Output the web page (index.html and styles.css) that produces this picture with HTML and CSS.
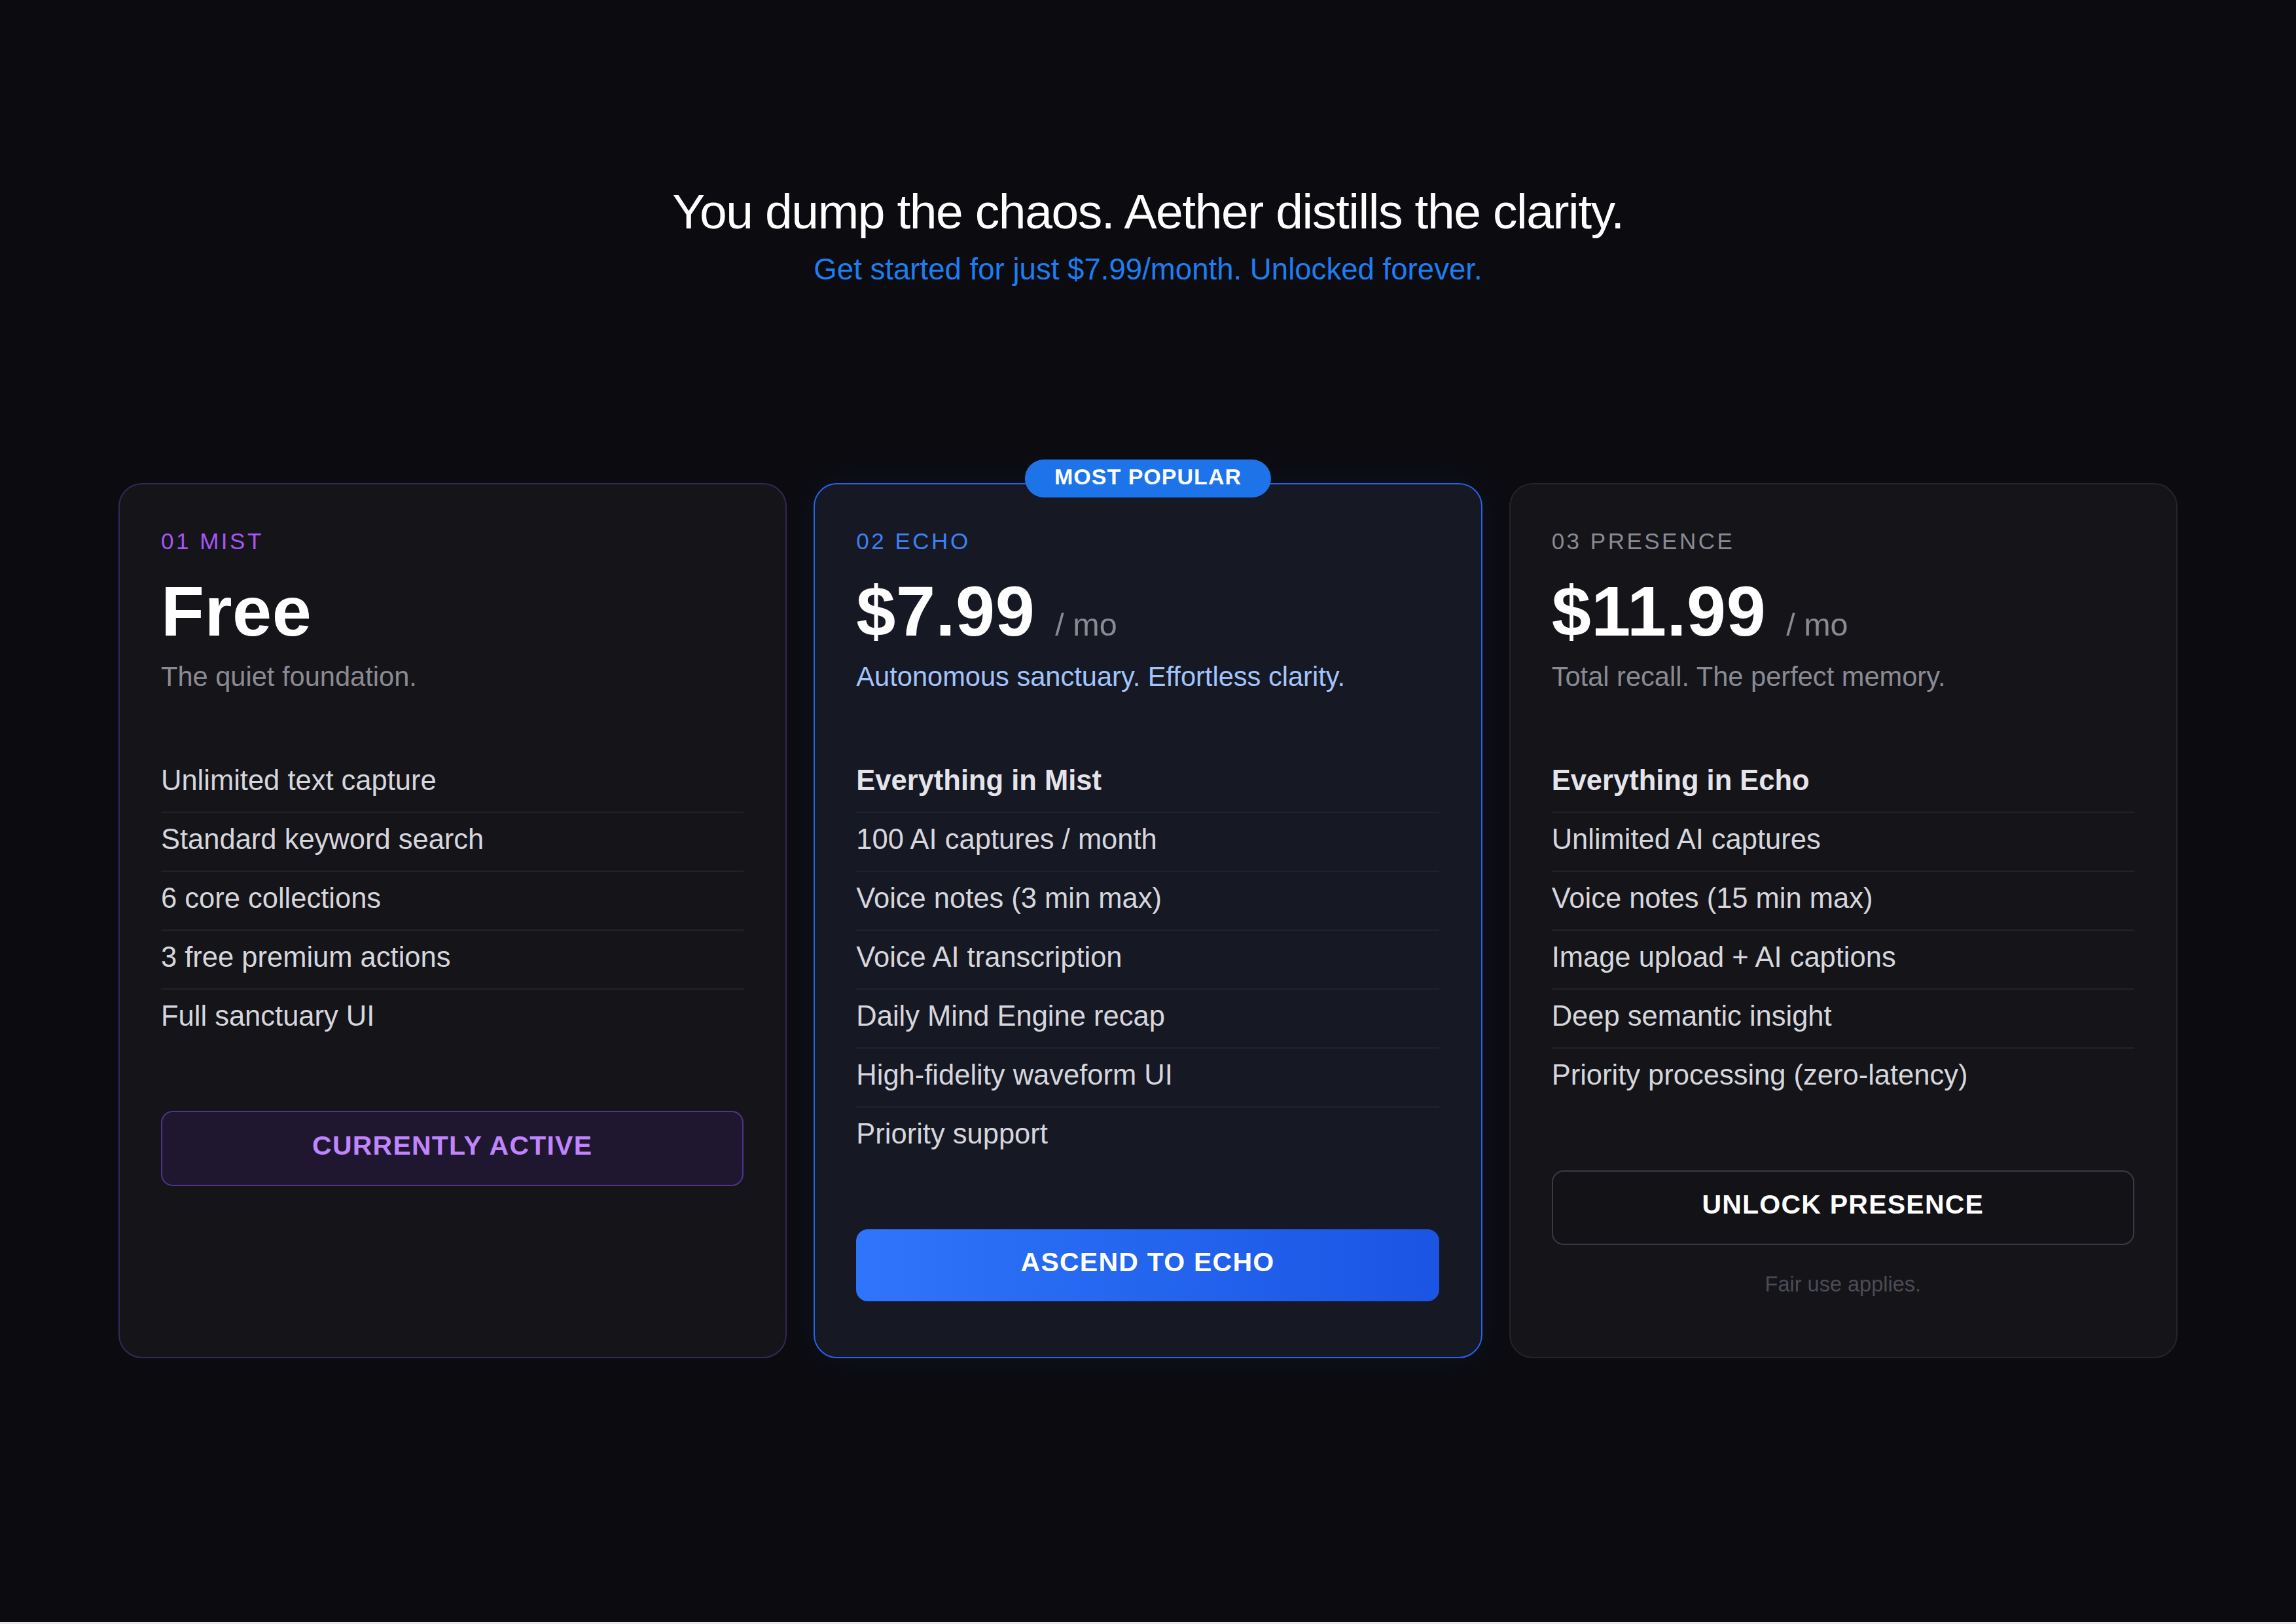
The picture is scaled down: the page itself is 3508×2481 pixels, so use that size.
FILE: index.html
```html
<!DOCTYPE html>
<html lang="en">
<head>
<meta charset="utf-8">
<title>Aether Pricing</title>
<link rel="stylesheet" href="styles.css">
</head>
<body>
<main class="page">
  <header class="hero">
    <h1 class="hero-title">You dump the chaos. Aether distills the clarity.</h1>
    <p class="hero-sub">Get started for just $7.99/month. Unlocked forever.</p>
  </header>

  <section class="plans">
    <article class="card card-mist">
      <div class="tier">01 MIST</div>
      <div class="price-row"><span class="price">Free</span></div>
      <p class="tagline">The quiet foundation.</p>
      <ul class="features">
        <li>Unlimited text capture</li>
        <li>Standard keyword search</li>
        <li>6 core collections</li>
        <li>3 free premium actions</li>
        <li>Full sanctuary UI</li>
      </ul>
      <button class="cta cta-active">CURRENTLY ACTIVE</button>
    </article>

    <article class="card card-echo">
      <div class="badge">MOST POPULAR</div>
      <div class="tier">02 ECHO</div>
      <div class="price-row"><span class="price">$7.99</span><span class="per">/ mo</span></div>
      <p class="tagline">Autonomous sanctuary. Effortless clarity.</p>
      <ul class="features">
        <li class="lead">Everything in Mist</li>
        <li>100 AI captures / month</li>
        <li>Voice notes (3 min max)</li>
        <li>Voice AI transcription</li>
        <li>Daily Mind Engine recap</li>
        <li>High-fidelity waveform UI</li>
        <li>Priority support</li>
      </ul>
      <button class="cta cta-primary">ASCEND TO ECHO</button>
    </article>

    <article class="card card-presence">
      <div class="tier">03 PRESENCE</div>
      <div class="price-row"><span class="price">$11.99</span><span class="per">/ mo</span></div>
      <p class="tagline">Total recall. The perfect memory.</p>
      <ul class="features">
        <li class="lead">Everything in Echo</li>
        <li>Unlimited AI captures</li>
        <li>Voice notes (15 min max)</li>
        <li>Image upload + AI captions</li>
        <li>Deep semantic insight</li>
        <li>Priority processing (zero-latency)</li>
      </ul>
      <button class="cta cta-outline">UNLOCK PRESENCE</button>
      <p class="fineprint">Fair use applies.</p>
    </article>
  </section>
</main>
</body>
</html>
```

FILE: styles.css
```css
* {
  box-sizing: border-box;
}

html {
  margin: 0;
  padding: 0;
  background: #e8e8ec;
}

body {
  margin: 0;
  padding: 0;
  background: #0c0c10;
  font-family: "Liberation Sans", Arial, Helvetica, sans-serif;
  color: #ffffff;
  height: 2478px;
  overflow: hidden;
}

.page {
  display: flex;
  flex-direction: column;
  align-items: center;
  padding-top: 278px;
}

.hero {
  text-align: center;
}

.hero-title {
  margin: 0;
  font-size: 75px;
  line-height: 90px;
  font-weight: 400;
  letter-spacing: -0.019em;
  color: #ffffff;
}

.hero-sub {
  margin: 12px 0 0;
  font-size: 45.6px;
  line-height: 63px;
  color: #1c7ef2;
}

.plans {
  margin-top: 295px;
  width: 3146px;
  display: grid;
  grid-template-columns: repeat(3, 1fr);
  gap: 41px;
  align-items: stretch;
}

.card {
  position: relative;
  display: flex;
  flex-direction: column;
  background: #141419;
  border: 2px solid #26262e;
  border-radius: 36px;
  padding: 66px 64px 85px 63px;
}

.card-mist {
  border-color: #35285a;
}

.card-echo {
  background: #161824;
  border-color: #2563eb;
  box-shadow: 0 0 60px rgba(37, 99, 235, 0.08);
}

.card-presence {
  border-color: #24242b;
}

.badge {
  position: absolute;
  top: -38px;
  left: 50%;
  transform: translateX(-50%);
  height: 58px;
  padding: 0 45px 5px;
  border-radius: 29px;
  background: #1d74e8;
  color: #ffffff;
  font-size: 34px;
  line-height: 53px;
  font-weight: 700;
  letter-spacing: 0.03em;
  white-space: nowrap;
}

.tier {
  font-size: 35px;
  line-height: 42px;
  letter-spacing: 0.1em;
  color: #8a8a93;
}

.card-mist .tier {
  color: #a855f7;
}

.card-echo .tier {
  color: #3b82f6;
}

.price-row {
  margin-top: 31px;
  display: flex;
  align-items: baseline;
  height: 110px;
}

.price {
  font-size: 108px;
  line-height: 110px;
  font-weight: 700;
  letter-spacing: 0.005em;
  color: #ffffff;
}

.per {
  margin-left: 31px;
  font-size: 48.5px;
  line-height: 48px;
  color: #8a8a93;
}

.tagline {
  margin: 16px 0 0;
  font-size: 41.6px;
  line-height: 57px;
  color: #8a8a93;
}

.card-echo .tagline {
  color: #a3c4fa;
}

.features {
  list-style: none;
  margin: 90px 0 0;
  padding: 0;
}

.features li {
  font-size: 43.5px;
  line-height: 48px;
  padding: 16px 0 24px;
  color: #d6d6dd;
  border-bottom: 2px solid #222229;
}

.card-echo .features li {
  border-bottom-color: #1f2230;
}

.features li:last-child {
  border-bottom: none;
}

.features li.lead {
  font-weight: 700;
  color: #e4e4ea;
}

.cta {
  margin-top: 97px;
  width: 100%;
  height: 115px;
  padding: 0 0 9px;
  border-radius: 18px;
  font-family: inherit;
  font-size: 41px;
  font-weight: 700;
  letter-spacing: 0.03em;
  cursor: pointer;
}

.cta-active {
  background: #1f1730;
  border: 2px solid #4f3488;
  color: #c084fc;
}

.cta-primary {
  margin-top: 98px;
  height: 110px;
  border: none;
  background: linear-gradient(90deg, #2f75fb 0%, #2465ee 50%, #1a55e3 100%);
  color: #ffffff;
}

.cta-outline {
  margin-top: 98px;
  height: 114px;
  background: #121217;
  border: 2px solid #3a3a43;
  color: #ffffff;
}

.fineprint {
  margin: 38px 0 0;
  text-align: center;
  font-size: 32.5px;
  line-height: 45px;
  color: #4b4b55;
}
```
